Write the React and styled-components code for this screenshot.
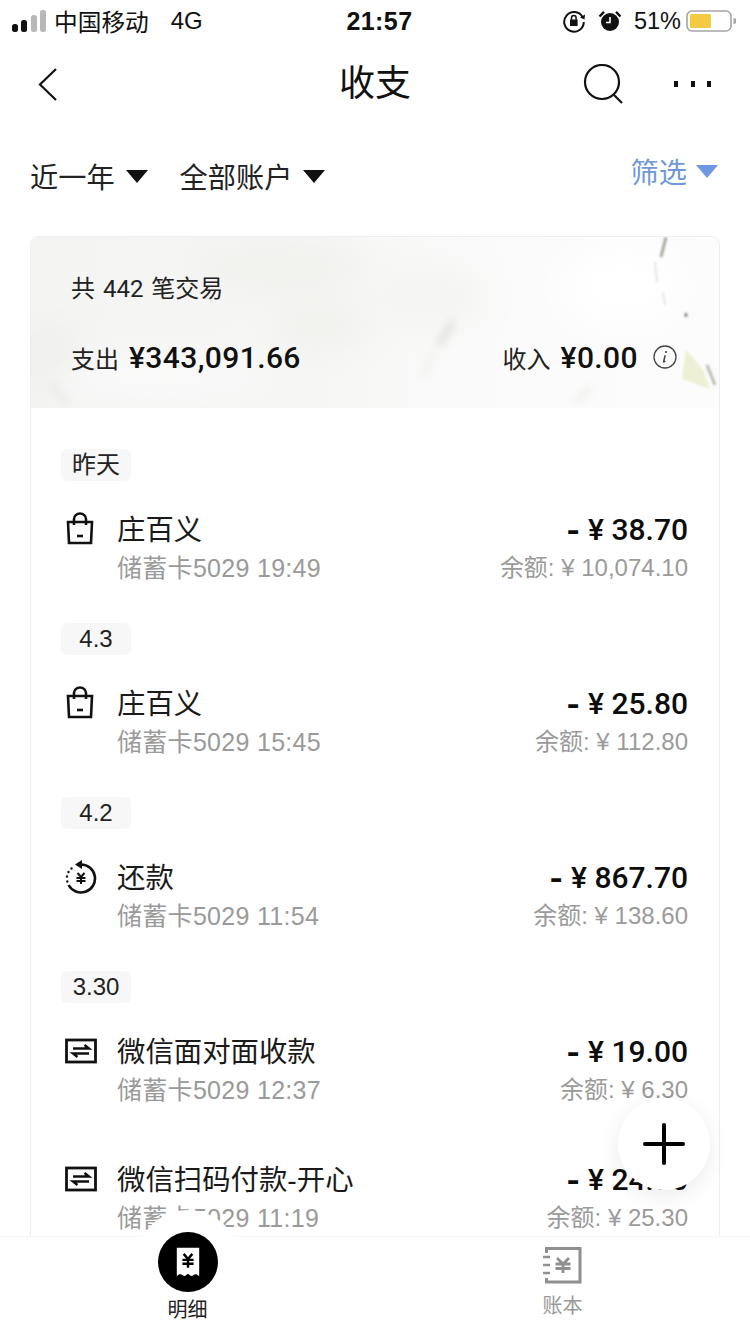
import React from 'react';
import styled, { createGlobalStyle } from 'styled-components';

const GlobalStyle = createGlobalStyle`
  html, body { margin: 0; padding: 0; background: #fff; }
  * { box-sizing: border-box; }
`;

const CJK = `"Liberation Sans", "Noto Sans CJK SC", sans-serif`;
const NUM = `Roboto, "Noto Sans CJK SC", sans-serif`;

const Page = styled.div`
  position: relative;
  width: 750px;
  height: 1334px;
  overflow: hidden;
  background: #fff;
  color: #111;
  font-family: ${CJK};
`;

const StatusBar = styled.div`
  height: 42px;
  padding: 0 14px 0 12px;
  display: grid;
  grid-template-columns: 1fr auto 1fr;
  align-items: center;
  font-size: 23.7px;
  color: #111;
`;

const StatusLeft = styled.div`
  display: flex;
  align-items: center;
  gap: 6px;
`;

const Network = styled.span`
  margin-left: 16px;
  font-size: 24px;
`;

const Clock = styled.span`
  margin-left: 11px;
  font-size: 25px;
  font-weight: 700;
  letter-spacing: 0.4px;
  color: #111;
`;

const StatusRight = styled.div`
  display: flex;
  align-items: center;
  justify-content: flex-end;
  gap: 12px;
`;

const Percent = styled.span`
  font-size: 23.5px;
  margin-right: -7px;
`;

const NavBar = styled.div`
  height: 84px;
  padding: 0 39px 0 36px;
  display: flex;
  align-items: center;
  justify-content: space-between;
  position: relative;
`;

const NavTitle = styled.div`
  position: absolute;
  left: 0;
  right: 0;
  text-align: center;
  font-size: 36px;
  line-height: 90px;
  font-weight: 400;
`;

const NavActions = styled.div`
  display: flex;
  align-items: center;
  gap: 51px;
`;

const FilterBar = styled.div`
  height: 98px;
  margin-bottom: 12px;
  padding: 0 30px;
  display: flex;
  align-items: center;
  gap: 32px;
`;

const Filter = styled.div`
  display: flex;
  align-items: center;
  gap: 11px;
  font-size: 28.2px;
  color: #222;
`;

const Screen = styled(Filter)`
  margin-left: auto;
  margin-top: -10px;
  padding-right: 2px;
  gap: 9px;
  color: #6f98d8;
`;

const Triangle = styled.i`
  display: block;
  width: 0;
  height: 0;
  margin-top: 2px;
  border-left: 11px solid transparent;
  border-right: 11px solid transparent;
  border-top: 13px solid ${p => p.$color || '#111'};
`;

const Card = styled.div`
  margin: 0 30px;
  border: 1px solid #eeeeee;
  border-radius: 8px;
  overflow: hidden;
`;

const Hero = styled.div`
  position: relative;
  height: 171px;
  padding: 0 42px 0 40px;
  display: flex;
  flex-direction: column;
  background: linear-gradient(90deg, #f4f4f3 0%, #f6f6f5 40%, #fbfbfb 70%, #fcfcfc 100%);
  overflow: hidden;
`;

const Marble = styled.svg`
  position: absolute;
  left: 0;
  top: 0;
`;

const HeroCount = styled.div`
  position: relative;
  margin-top: 34px;
  line-height: 36px;
  font-size: 24px;
  font-family: ${NUM};
  word-spacing: 2px;
  color: #222;
`;

const HeroStats = styled.div`
  position: relative;
  margin-top: 32px;
  height: 36px;
  display: flex;
  align-items: center;
  justify-content: space-between;
`;

const Stat = styled.div`
  display: flex;
  align-items: baseline;
  gap: 10px;
  font-size: 24px;
  color: #222;
`;

const StatValue = styled.span`
  font-family: ${NUM};
  font-size: 30px;
  font-weight: 500;
  letter-spacing: 0.4px;
  color: #111;
`;

const InfoSlot = styled.span`
  display: flex;
  align-self: center;
  margin-left: 5px;
`;

const List = styled.div`
  padding: 41px 31px 0 30px;
`;

const DateTag = styled.div`
  width: 70px;
  height: 32px;
  border-radius: 6px;
  background: #f7f7f7;
  text-align: center;
  font-size: 24px;
  line-height: 32px;
  color: #222;
`;

const Group = styled.div`
  margin-bottom: 38px;
`;

const Row = styled.div`
  margin-top: ${p => (p.$joined ? '52px' : '28px')};
  display: grid;
  grid-template-columns: 34px 1fr auto;
  column-gap: 18px;
  padding-left: 4px;
`;

const RowIcon = styled.div`
  height: 40px;
  display: flex;
  align-items: center;
`;

const Info = styled.div`
  display: flex;
  flex-direction: column;
`;

const Amounts = styled(Info)`
  align-items: flex-end;
`;

const Title = styled.div`
  font-size: 28.4px;
  line-height: 42px;
  color: #1a1a1a;
  white-space: nowrap;
`;

const Sub = styled.div`
  font-size: 25px;
  line-height: 34px;
  letter-spacing: 0.3px;
  color: #9a9a9a;
  white-space: nowrap;
`;

const Balance = styled(Sub)`
  font-size: 24px;
  letter-spacing: 0;
`;

const Amount = styled.div`
  font-family: ${NUM};
  font-size: 30px;
  font-weight: 500;
  line-height: 42px;
  color: #0d0d0d;
  white-space: pre;
`;

const Dash = styled.span`
  font-size: 38px;
  line-height: 0;
  margin-right: 1px;
  vertical-align: -4px;
`;

const Fab = styled.div`
  position: absolute;
  left: 618px;
  top: 1098px;
  width: 92px;
  height: 92px;
  border-radius: 50%;
  background: #fff;
  box-shadow: 0 6px 22px rgba(0, 0, 0, 0.08);
  display: flex;
  align-items: center;
  justify-content: center;
`;

const TabBar = styled.div`
  position: absolute;
  left: 0;
  right: 0;
  bottom: 0;
  height: 98px;
  background: #fff;
  border-top: 1px solid #f4f4f4;
`;

const TabHalo = styled.div`
  position: absolute;
  left: 136px;
  top: 1210px;
  width: 104px;
  height: 104px;
  border-radius: 50%;
  background: #fff;
`;

const Tabs = styled.div`
  position: absolute;
  left: 0;
  right: 0;
  top: 1232px;
  display: grid;
  grid-template-columns: 375px 375px;
`;

const Tab = styled.div`
  display: flex;
  flex-direction: column;
  align-items: center;
  font-size: 20px;
  color: ${p => (p.$active ? '#222' : '#999')};
`;

const ActiveTabIcon = styled.div`
  width: 60px;
  height: 60px;
  border-radius: 50%;
  background: #000;
  display: flex;
  align-items: center;
  justify-content: center;
`;

const TabIconSlot = styled.div`
  height: 60px;
  display: flex;
  align-items: flex-end;
  padding-bottom: 7px;
`;

const TabLabel = styled.div`
  margin-top: ${p => p.$top}px;
  line-height: 24px;
`;

const Signal = () => (
  <svg width="36" height="28" viewBox="0 0 36 28">
    <rect x="0" y="17" width="6" height="8" rx="2.5" fill="#111" />
    <rect x="9" y="13" width="6" height="12" rx="2.5" fill="#111" />
    <rect x="19" y="8" width="6" height="17" rx="2.5" fill="#b8b8b8" />
    <rect x="28" y="3" width="6" height="22" rx="2.5" fill="#b8b8b8" />
  </svg>
);

const RotationLock = () => (
  <svg width="24" height="24" viewBox="0 0 24 24" fill="none" stroke="#111" strokeWidth="2">
    <path d="M20.5 8A9.8 9.8 0 1 0 21.8 13" />
    <path d="M18 8.5l4.5 2 .5-5" fill="#111" stroke="none" />
    <rect x="8" y="10.5" width="7.6" height="6.5" fill="#111" stroke="none" />
    <path d="M9.5 11V8.800a2.300 2.300 0 0 1 4.600 0V11" strokeWidth="1.5" />
  </svg>
);

const Alarm = () => (
  <svg width="24" height="24" viewBox="0 0 24 24">
    <circle cx="12" cy="13" r="9" fill="#111" />
    <path d="M12 8v5.500h-4" fill="none" stroke="#fff" strokeWidth="1.6" />
    <path d="M1.500 7.500L6 2.800M22.500 7.500L18 2.800" stroke="#111" strokeWidth="2.4" />
  </svg>
);

const Battery = () => (
  <svg width="50" height="24" viewBox="0 0 50 24">
    <rect x="1" y="2" width="44" height="20" rx="5" fill="none" stroke="#a5a5a5" strokeWidth="1.6" />
    <rect x="4" y="5" width="21" height="14" rx="1.5" fill="#f4c944" />
    <path d="M47.500 9v6a3 3 0 0 0 0-6z" fill="#a5a5a5" />
  </svg>
);

const Back = () => (
  <svg width="24" height="34" viewBox="0 0 24 34" fill="none" stroke="#111" strokeWidth="2.2">
    <path d="M20 2L4 17.500 20 33" />
  </svg>
);

const Search = () => (
  <svg width="40" height="40" viewBox="0 0 40 40" fill="none" stroke="#111" strokeWidth="2.2">
    <circle cx="19" cy="18" r="17" />
    <path d="M31 31l8 8" />
  </svg>
);

const More = () => (
  <svg width="37" height="8" viewBox="0 0 37 8" fill="#111">
    <rect x="0" y="1" width="4" height="6" />
    <rect x="17" y="1" width="4" height="6" />
    <rect x="33" y="1" width="4" height="6" />
  </svg>
);

const InfoIcon = () => (
  <svg width="24" height="24" viewBox="0 0 24 24" fill="none" stroke="#444">
    <circle cx="12" cy="12" r="11" strokeWidth="1.3" />
    <path d="M12.200 10.200l-1.500 6.200c-.1.600.4.800 1.600-.4" strokeWidth="1.5" />
    <circle cx="13" cy="7" r="1.1" fill="#444" stroke="none" />
  </svg>
);

const Bag = () => (
  <svg width="30" height="34" viewBox="0 0 30 34" fill="none" stroke="#111" strokeWidth="2.6">
    <path d="M3 10h24l-1 21H4z" />
    <path d="M9 13V7a6 5.500 0 0 1 12 0v6" />
    <path d="M12 24h6" />
  </svg>
);

const Repay = () => (
  <svg width="32" height="34" viewBox="0 0 32 34" fill="none" stroke="#111">
    <path d="M16 4.500A14 14 0 1 1 3.600 25" strokeWidth="2.6" />
    <path d="M17 0v9l-7-4.500z" fill="#111" stroke="none" />
    <path d="M2.300 21.500v.1M2 16.500v.1M3.500 12v.1M6.500 8.500v.1" strokeWidth="2.400" strokeLinecap="round" />
    <path d="M12.500 13l3.500 4 3.500-4M11.500 18h9M11.500 21h9M16 17v7" strokeWidth="2" />
  </svg>
);

const Transfer = () => (
  <svg width="32" height="26" viewBox="0 0 32 26" fill="none" stroke="#111">
    <rect x="1.500" y="2" width="29" height="22" strokeWidth="2.800" />
    <path d="M8 10.500h16l-4.500-3.500" strokeWidth="2.400" />
    <path d="M24 15.500H8l4.500 3.500" strokeWidth="2.400" />
  </svg>
);

const Plus = () => (
  <svg width="42" height="42" viewBox="0 0 42 42" stroke="#000" strokeWidth="4" strokeLinecap="round">
    <path d="M2 21h38M21 2v38" />
  </svg>
);

const Receipt = () => (
  <svg width="26" height="31" viewBox="0 0 30 36">
    <path d="M2 1h26v33c-3-3-5-3-6.500-1.500s-3 1.500-4.500 0-3-1.500-4 0-3 1.500-4.500 0S4 31 2 34z" fill="#fff" />
    <path d="M10 8l5 6 5-6M8.500 15h13M8.500 19.500h13M15 14v10" fill="none" stroke="#000" strokeWidth="2.800" />
  </svg>
);

const Ledger = () => (
  <svg width="40" height="40" viewBox="0 0 40 40" fill="none" stroke="#8f8f8f">
    <path d="M3.500 8V3.500H37V37H3.500v-4" strokeWidth="3" />
    <path d="M0 12h7M0 20h7M0 28h7" strokeWidth="2.400" />
    <path d="M14 13l6 6 6-6M12.500 19h15M12.500 23.500h15M20 19v9" strokeWidth="2.800" />
  </svg>
);

const icons = { bag: <Bag />, repay: <Repay />, transfer: <Transfer /> };

const groups = [
  {
    date: '昨天',
    rows: [{ icon: 'bag', title: '庄百义', sub: '储蓄卡5029 19:49', amount: '38.70', balance: '余额: ¥ 10,074.10' }],
  },
  {
    date: '4.3',
    rows: [{ icon: 'bag', title: '庄百义', sub: '储蓄卡5029 15:45', amount: '25.80', balance: '余额: ¥ 112.80' }],
  },
  {
    date: '4.2',
    rows: [{ icon: 'repay', title: '还款', sub: '储蓄卡5029 11:54', amount: '867.70', balance: '余额: ¥ 138.60' }],
  },
  {
    date: '3.30',
    rows: [
      { icon: 'transfer', title: '微信面对面收款', sub: '储蓄卡5029 12:37', amount: '19.00', balance: '余额: ¥ 6.30' },
      { icon: 'transfer', title: '微信扫码付款-开心', sub: '储蓄卡5029 11:19', amount: '24.90', balance: '余额: ¥ 25.30' },
    ],
  },
];

export default function App() {
  return (
    <Page>
      <GlobalStyle />
      <StatusBar>
        <StatusLeft>
          <Signal />
          <span>中国移动</span>
          <Network>4G</Network>
        </StatusLeft>
        <Clock>21:57</Clock>
        <StatusRight>
          <RotationLock />
          <Alarm />
          <Percent>51%</Percent>
          <Battery />
        </StatusRight>
      </StatusBar>

      <NavBar>
        <Back />
        <NavTitle>收支</NavTitle>
        <NavActions>
          <Search />
          <More />
        </NavActions>
      </NavBar>

      <FilterBar>
        <Filter>近一年<Triangle /></Filter>
        <Filter>全部账户<Triangle /></Filter>
        <Screen>筛选<Triangle $color="#6f98e4" /></Screen>
      </FilterBar>

      <Card>
        <Hero>
          <Marble width="690" height="171" viewBox="0 0 690 171">
            <defs>
              <filter id="soft" x="-50%" y="-50%" width="200%" height="200%"><feGaussianBlur stdDeviation="4" /></filter>
              <filter id="fine" x="-50%" y="-50%" width="200%" height="200%"><feGaussianBlur stdDeviation="1.2" /></filter>
              <filter id="cloud" x="-50%" y="-50%" width="200%" height="200%"><feGaussianBlur stdDeviation="18" /></filter>
            </defs>
            <g filter="url(#cloud)">
              <ellipse cx="250" cy="30" rx="90" ry="20" fill="#f0f0ec" />
              <ellipse cx="290" cy="90" rx="50" ry="20" fill="#f0f0ec" />
              <ellipse cx="20" cy="130" rx="28" ry="30" fill="#e8e8e6" />
              <ellipse cx="120" cy="140" rx="120" ry="20" fill="#fafafa" />
              <ellipse cx="400" cy="60" rx="60" ry="30" fill="#f4f4f2" />
              <ellipse cx="590" cy="50" rx="60" ry="40" fill="#ffffff" />
            </g>
            <g filter="url(#soft)" fill="none">
              <path d="M422 84L408 108" stroke="#d8d8d0" strokeWidth="5" />
              <path d="M404 112L392 140" stroke="#eeeeeb" strokeWidth="4" />
              <path d="M20 145L36 168" stroke="#e6e6e3" strokeWidth="4" />
              <path d="M560 150L545 165" stroke="#e8e8e4" strokeWidth="4" />
            </g>
            <g filter="url(#fine)" fill="none">
              <path d="M635 0L630 20" stroke="#a5a59d" strokeWidth="3" />
              <path d="M624 25L626 45M632 55L634 68" stroke="#e6e6e3" strokeWidth="2" />
              <path d="M655 76v4" stroke="#8f8f88" strokeWidth="3" />
              <path d="M676 128l8 20" stroke="#bcbcb4" strokeWidth="3" />
            </g>
            <path d="M655 112l18 22 6 18-28-10z" fill="#eef0d6" filter="url(#fine)" />
          </Marble>
          <HeroCount>共 442 笔交易</HeroCount>
          <HeroStats>
            <Stat>支出<StatValue>¥343,091.66</StatValue></Stat>
            <Stat>收入<StatValue>¥0.00</StatValue><InfoSlot><InfoIcon /></InfoSlot></Stat>
          </HeroStats>
        </Hero>

        <List>
          {groups.map(group => (
            <Group key={group.date}>
              <DateTag>{group.date}</DateTag>
              {group.rows.map((row, i) => (
                <Row key={row.sub} $joined={i > 0}>
                  <RowIcon>{icons[row.icon]}</RowIcon>
                  <Info>
                    <Title>{row.title}</Title>
                    <Sub>{row.sub}</Sub>
                  </Info>
                  <Amounts>
                    <Amount><Dash>-</Dash> ¥ {row.amount}</Amount>
                    <Balance>{row.balance}</Balance>
                  </Amounts>
                </Row>
              ))}
            </Group>
          ))}
        </List>
      </Card>

      <Fab><Plus /></Fab>

      <TabBar />
      <TabHalo />
      <Tabs>
        <Tab $active>
          <ActiveTabIcon><Receipt /></ActiveTabIcon>
          <TabLabel $top={6}>明细</TabLabel>
        </Tab>
        <Tab>
          <TabIconSlot><Ledger /></TabIconSlot>
          <TabLabel $top={2}>账本</TabLabel>
        </Tab>
      </Tabs>
    </Page>
  );
}
